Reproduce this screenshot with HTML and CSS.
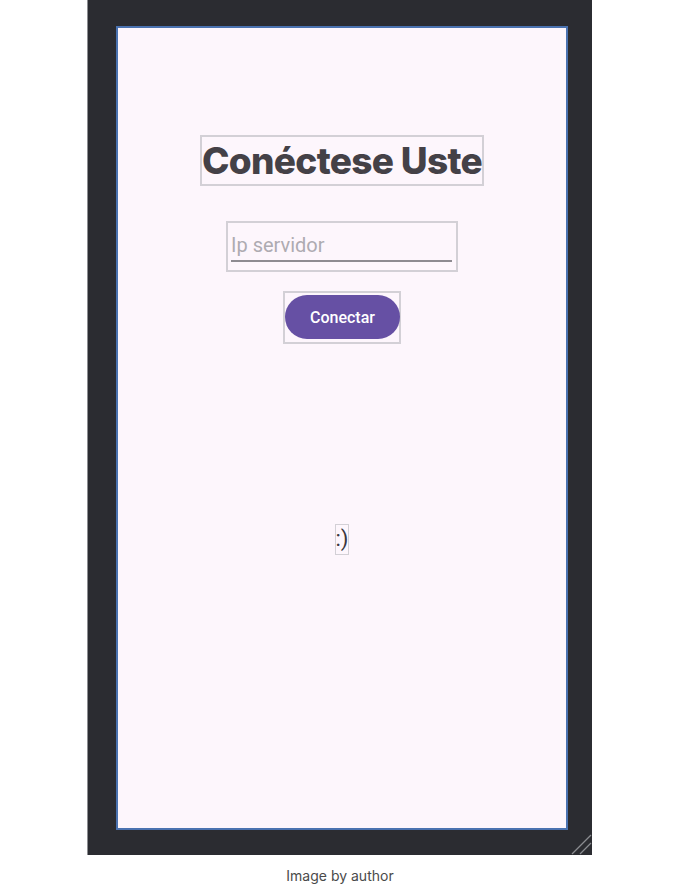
FILE: index.html
```html
<!DOCTYPE html>
<html>
<head>
<meta charset="utf-8">
<link rel="stylesheet" href="styles.css">
</head>
<body>
<div class="page">
  <div class="frame">
    <div class="screen">
      <div class="title-box"><span class="title">Conéctese Uste</span></div>
      <div class="input-box"><div class="input">Ip servidor</div></div>
      <div class="btn-box"><div class="btn">Conectar</div></div>
      <div class="smile">:)</div>
    </div>
    <svg class="grip" width="22" height="22" viewBox="0 0 22 22">
      <line x1="2" y1="21" x2="21" y2="2" stroke="#8a8c90" stroke-width="1.2"/>
      <line x1="10" y1="21" x2="21" y2="10" stroke="#8a8c90" stroke-width="1.2"/>
    </svg>
  </div>
  <div class="caption">Image by author</div>
</div>
</body>
</html>
```
FILE: styles.css
```css
html, body { margin: 0; padding: 0; background: #ffffff; }
.page { width: 680px; height: 886px; display: flex; flex-direction: column; align-items: flex-start; }
.frame {
  position: relative;
  margin-left: 87px;
  width: 505px;
  height: 855px;
  background: #2b2c31;
  border-left: 1px solid #8d8e92;
  padding: 26px 0 0 28px;
  box-sizing: border-box;
}
.screen {
  width: 452px;
  height: 804px;
  box-sizing: border-box;
  border: 2px solid #4a72b0;
  background: #fdf6fc;
  display: flex;
  flex-direction: column;
  align-items: center;
  padding-top: 107px;
}
.title-box {
  border: 2px solid #d3d0d6;
  height: 51px;
  width: 284px;
  box-sizing: border-box;
  display: flex;
  align-items: center;
  justify-content: center;
}
.title {
  font-family: "Inter", sans-serif;
  font-weight: 800;
  font-size: 37px;
  color: #444147;
  letter-spacing: -0.7px;
  white-space: nowrap;
}
.input-box {
  margin-top: 35px;
  width: 232px;
  height: 51px;
  box-sizing: border-box;
  border: 2px solid #d3d0d6;
  padding: 8px 4px 0 3px;
}
.input {
  font-family: "Roboto", sans-serif;
  font-size: 20px;
  color: #aeabb1;
  height: 29px;
  line-height: 29px;
  border-bottom: 2px solid #8e8b91;
  padding-left: 0;
}
.btn-box {
  margin-top: 19px;
  width: 118px;
  height: 53px;
  box-sizing: border-box;
  border: 2px solid #d3d0d6;
  padding: 2px 1px 0 0;
}
.btn {
  width: 115px;
  height: 44px;
  border-radius: 22px;
  background: #6650a4;
  color: #ffffff;
  font-family: "Roboto", sans-serif;
  font-weight: 500;
  font-size: 16px;
  display: flex;
  align-items: center;
  justify-content: center;
}
.smile {
  margin-top: 180px;
  border: 1px solid #d3d0d6;
  width: 14px;
  height: 31px;
  box-sizing: border-box;
  font-family: "Roboto", sans-serif;
  font-size: 22px;
  color: #3a373d;
  line-height: 28px;
  display: flex;
  justify-content: center;
}
.grip { position: absolute; right: 0; bottom: 0; }
.caption {
  width: 680px;
  text-align: center;
  margin-top: 12px;
  font-family: "Inter", "Liberation Sans", sans-serif;
  font-size: 14px;
  color: #4a4a4a;
}
```
